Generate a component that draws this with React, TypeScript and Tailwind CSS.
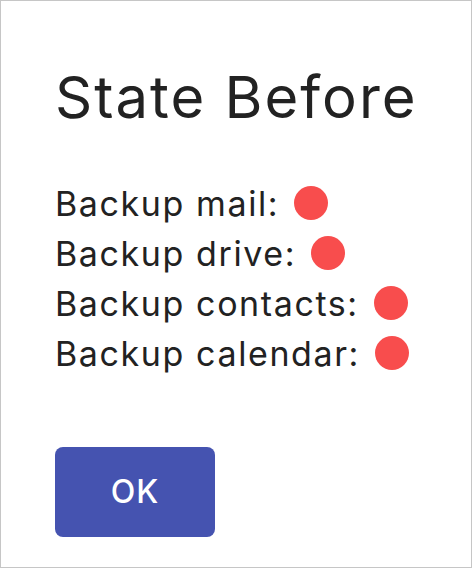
const items = ["Backup mail:", "Backup drive:", "Backup contacts:", "Backup calendar:"];

export default function App() {
  return (
    <div className="w-[472px] h-[568px] border border-[#c6c6c6] bg-white pl-[54px] pt-[60px] font-['Inter','Noto_Sans',sans-serif] text-[#222222]">
      <h1 className="text-[58px] leading-[72px] font-normal tracking-[2px]">State Before</h1>

      <div className="mt-[45px] flex flex-col">
        {items.map((label) => (
          <div key={label} className="flex items-center h-[50px] text-[34px] tracking-[1.6px]">
            <span>{label}</span>
            <span className="ml-[15px] w-[34px] h-[34px] rounded-full bg-[#f84d4d]" />
          </div>
        ))}
      </div>

      <button className="mt-[69px] w-[160px] h-[90px] rounded-lg bg-[#4553b0] text-white text-[32px] font-medium tracking-[1px]">
        OK
      </button>
    </div>
  );
}
